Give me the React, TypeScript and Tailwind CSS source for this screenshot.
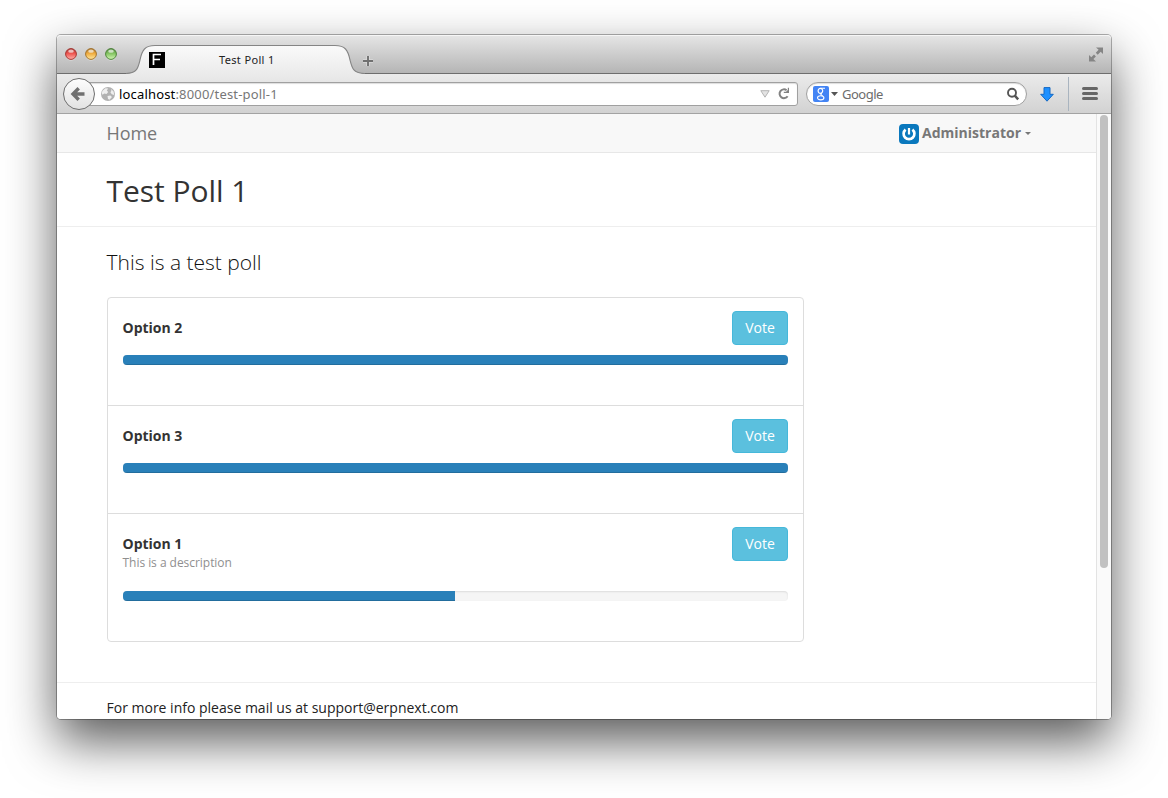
import React from "react";

const options = [
  { name: "Option 2", description: "", share: 100 },
  { name: "Option 3", description: "", share: 100 },
  { name: "Option 1", description: "This is a description", share: 49.9 },
];

function TrafficLight({ color, edge, glow }: { color: string; edge: string; glow: string }) {
  const id = "light" + color.slice(1);
  return (
    <svg width="12" height="13" viewBox="0 0 12 13">
      <defs>
        <linearGradient id={id} x1="0" y1="0" x2="0" y2="1">
          <stop offset="0" stopColor={edge} />
          <stop offset="0.45" stopColor={color} />
          <stop offset="1" stopColor={glow} />
        </linearGradient>
      </defs>
      <circle cx="6" cy="7" r="5.5" fill="#fff" opacity="0.5" />
      <circle cx="6" cy="6" r="5.4" fill={`url(#${id})`} stroke={edge} strokeWidth="1" />
      <ellipse cx="6" cy="3.2" rx="2.8" ry="1.6" fill="#fff" opacity="0.65" />
    </svg>
  );
}

function TabBar() {
  return (
    <div className="relative flex h-[38px] shrink-0 items-center rounded-t-[4px] bg-linear-to-b from-[#e6e6e6] to-[#b5b5b5] shadow-[inset_0_1px_0_#f6f6f6]">
      <div className="flex gap-2 pl-2">
        <TrafficLight color="#ee5550" edge="#a33430" glow="#ffb0aa" />
        <TrafficLight color="#f0ac3e" edge="#a1702a" glow="#ffe9a0" />
        <TrafficLight color="#84c462" edge="#4c8239" glow="#d3f7b5" />
      </div>
      <svg className="absolute left-[69px] top-[9px] z-10" width="240" height="30" viewBox="0 0 240 30">
        <defs>
          <linearGradient id="tab" x1="0" y1="0" x2="0" y2="1">
            <stop offset="0" stopColor="#fafafa" />
            <stop offset="1" stopColor="#ebebeb" />
          </linearGradient>
        </defs>
        <path d="M0 30V29.5C11 29.5 12 24 14 16C16 6 19 1.5 29 1.5H209C219 1.5 222 6 224 16C226 24 227 29.5 239 29.5V30Z" fill="url(#tab)" />
        <path d="M0 29.5C11 29.5 12 24 14 16C16 6 19 1.5 29 1.5H209C219 1.5 222 6 224 16C226 24 227 29.5 239 29.5" fill="none" stroke="#858585" strokeWidth="1.1" />
      </svg>
      <div className="relative z-20 ml-[32px] mt-[12px] flex h-4 w-4 items-center justify-center bg-black">
        <svg width="16" height="16" viewBox="0 0 16 16">
          <path d="M4.5 13V2.5H12M4.5 7.5H11" fill="none" stroke="#fff" strokeWidth="1.7" />
        </svg>
      </div>
      <div className="relative z-20 ml-[54px] mt-[12px] w-[140px] font-['Noto_Sans',sans-serif] text-[11px] leading-4 tracking-[0.35px] text-[#222]">Test Poll 1</div>
      <svg className="ml-[3px] mt-[13px]" width="12" height="12" viewBox="0 0 12 12">
        <path d="M6 1V11M1 6H11" stroke="#f2f2f2" strokeWidth="3.4" opacity="0.5" />
        <path d="M6 1V11M1 6H11" stroke="#707070" strokeWidth="1.9" />
      </svg>
      <svg className="absolute right-[7px] top-[12px]" width="16" height="15" viewBox="0 0 16 15">
        <path d="M8 .5H15V7L12.7 4.8L9.7 7.7L7.8 5.8L10.6 2.8ZM1 8L3.3 10.2L6 7.5L7.9 9.4L5.4 12.1L8 14.5H1Z" fill="#858585" />
      </svg>
    </div>
  );
}

function Toolbar() {
  return (
    <div className="relative flex h-[40px] shrink-0 items-center border-b border-[#a3a3a3] bg-linear-to-b from-[#ebebeb] to-[#d2d2d2] font-['Noto_Sans',sans-serif] text-[12px]">
      <div className="z-10 ml-[6px] flex h-8 w-8 items-center justify-center rounded-full border border-[#6e6e6e] bg-linear-to-b from-[#fdfdfd] to-[#e2e2e2]">
        <svg className="-ml-[2px]" width="16" height="16" viewBox="0 0 16 16">
          <path d="M8.7 2.2L3 8L8.7 13.8M3.5 8H14.5" fill="none" stroke="#707070" strokeWidth="3.4" />
        </svg>
      </div>
      <div className="-ml-[8px] flex h-6 w-[711px] items-center rounded-r-[3px] border border-[#a0a0a0] bg-white pl-[13px] shadow-[inset_0_1px_1px_#ddd]">
        <svg width="14" height="14" viewBox="0 0 14 14">
          <circle cx="7" cy="7" r="7" fill="#b2b2b2" />
          <path d="M1.5 3.8L4.5 1.2L7.2 1.6L5.8 3.6L7.2 5L5.5 7L3.4 6.4L1.4 7.8L.8 6ZM10 2L12.6 4.6L13.2 8L10.8 7.3L9.4 5.3L10.4 4ZM6.5 9L9.4 8.4L11 10L8.5 12.8L7 12Z" fill="#efefef" />
        </svg>
        <span className="ml-[4px] whitespace-pre text-[13px] leading-5 tracking-[0.17px] text-[#777]"><span className="text-black">localhost</span>:8000/test-poll-1</span>
        <svg className="ml-auto" width="10" height="8" viewBox="0 0 10 8">
          <path d="M.8 .7H9.2L5 7.2Z" fill="#e3e3e3" stroke="#b4b4b4" strokeWidth="1" />
        </svg>
        <svg className="ml-[7px] mr-[7px]" width="13" height="13" viewBox="0 0 13 13">
          <path d="M9.6 3.2A4.4 4.4 0 1 0 10.6 9.2" fill="none" stroke="#828282" strokeWidth="2" />
          <path d="M12 .8V6H6.8V4.8H9L10.8 3V.8Z" fill="#828282" />
        </svg>
      </div>
      <div className="ml-[8px] flex h-6 w-[221px] items-center rounded-full border border-[#a0a0a0] bg-white pl-[6px] shadow-[inset_0_1px_1px_#ddd]">
        <span className="flex h-4 w-4 items-center justify-center rounded-[2px] bg-[#4384f4]">
          <svg width="10" height="14" viewBox="0 0 10 14">
            <ellipse cx="4.4" cy="3.8" rx="2.3" ry="2.5" fill="none" stroke="#fff" strokeWidth="1.2" />
            <ellipse cx="4.7" cy="10.8" rx="3.2" ry="2.1" fill="none" stroke="#fff" strokeWidth="1.1" />
            <path d="M4.6 1.2H9M5.8 6C3.8 7.2 5 7.6 6.6 8.9" fill="none" stroke="#fff" strokeWidth="1.1" />
          </svg>
        </span>
        <svg className="ml-[2px]" width="7" height="4" viewBox="0 0 7 4"><path d="M0 0H7L3.5 4Z" fill="#555" /></svg>
        <span className="ml-[4px] text-[13px] leading-5 tracking-[-0.5px] text-[#6c6c6c]">Google</span>
        <svg className="ml-auto mr-[6px]" width="14" height="14" viewBox="0 0 14 14">
          <circle cx="6" cy="5.7" r="4" fill="none" stroke="#555" strokeWidth="1.9" />
          <path d="M8.8 8.7L12.2 12.4" stroke="#555" strokeWidth="2.5" />
        </svg>
      </div>
      <svg className="ml-[13px] mt-px" width="14" height="15" viewBox="0 0 14 15">
        <path d="M4 .6H10V7.3H13.3L7 14.2L.7 7.3H4Z" fill="#1d90ff" stroke="#1569c4" strokeWidth="1" />
      </svg>
      <div className="ml-[14px] h-[34px] w-px bg-[#a9b4bf]" />
      <div className="-mt-px ml-[13px] flex w-4 flex-col gap-[2px]">
        <i className="h-[3px] rounded-full bg-[#666]" />
        <i className="h-[3px] rounded-full bg-[#666]" />
        <i className="h-[3px] rounded-full bg-[#666]" />
      </div>
    </div>
  );
}

function Poll() {
  return (
    <div className="w-[697px] divide-y divide-[#ddd] rounded-[4px] border border-[#ddd]">
      {options.map((option) => (
        <div key={option.name} className={option.description ? "h-[127px] px-[15px] pt-[13px]" : "h-[108px] px-[15px] pt-[13px]"}>
          <div className="flex justify-between">
            <div className="-ml-[0.5px] pt-[7px]">
              <div className="text-[14px] font-bold leading-5">{option.name}</div>
              {option.description && <div className="text-[12px] leading-[17px] tracking-[-0.04px] text-[#8f8f8f]">{option.description}</div>}
            </div>
            <button className="h-[34px] w-[56px] rounded-[4px] border border-[#46b8da] bg-[#5bc0de] pb-[2px] text-[14px] text-white">Vote</button>
          </div>
          <div className={(option.description ? "mt-[20px]" : "mt-[10px]") + " h-[10px] overflow-hidden rounded-[4px] bg-[#f5f5f5] shadow-[inset_0_1px_2px_rgba(0,0,0,0.1)]"}>
            <div className="h-full bg-[#2980b9] shadow-[inset_0_-1px_0_rgba(0,0,0,0.15)]" style={{ width: `${option.share}%` }} />
          </div>
        </div>
      ))}
    </div>
  );
}

function Page() {
  return (
    <div className="flex min-h-0 flex-1 overflow-hidden rounded-b-[4px] bg-white">
      <div className="flex w-[1039px] flex-col">
        <nav className="flex h-[39px] shrink-0 items-center border-b border-[#e7e7e7] bg-[#f8f8f8] pl-[49.5px] text-[#777]">
          <a className="text-[18px] tracking-[-0.1px]">Home</a>
          <a className="ml-auto mr-[65px] flex items-center text-[14px] font-bold">
            <svg className="mr-[3px] mt-px" width="20" height="20" viewBox="0 0 20 20">
              <rect width="20" height="20" rx="4" fill="#0a78bd" />
              <path d="M6.6 5.6A5.4 5.4 0 1 0 13.4 5.6" fill="none" stroke="#fff" strokeWidth="2.7" />
              <path d="M10 4V10.5" stroke="#fff" strokeWidth="2.2" />
            </svg>
            <span className="-mt-[2px]">Administrator</span>
            <svg className="ml-[4px]" width="6" height="3" viewBox="0 0 6 3"><path d="M0 0H6L3 3Z" fill="#777" /></svg>
          </a>
        </nav>
        <header className="flex h-[74px] shrink-0 items-center border-b border-[#eee] pl-[49.5px] pt-[2px]">
          <h1 className="text-[30px] leading-[33px] tracking-[-0.05px]">Test Poll 1</h1>
        </header>
        <main className="h-[455px] shrink-0 pl-[50px] pt-[20px]">
          <p className="-ml-[0.5px] mb-[20px] text-[21px] font-light leading-[30px] text-[#111]">This is a test poll</p>
          <Poll />
        </main>
        <footer className="h-[38px] shrink-0 border-t border-[#eee] pl-[49.5px] pt-[15px] text-[14px] leading-5 text-[#222]">
          For more info please mail us at support@erpnext.com
        </footer>
      </div>
      <div className="w-[15px] border-l border-[#e3e3e3] bg-[#fafafa] pl-[3px] pt-px">
        <div className="h-[453px] w-[8px] rounded-full bg-[#c1c1c1]" />
      </div>
    </div>
  );
}

export default function App() {
  return (
    <div className="h-[798px] w-[1168px] overflow-hidden bg-white pl-[57px] pt-[35px] font-['Open_Sans',sans-serif] text-[#333]">
      <div className="flex h-[684px] w-[1054px] flex-col rounded-[4px] shadow-[0_0_0_1px_rgba(0,0,0,0.3),0_22px_50px_rgba(0,0,0,0.65)]">
        <TabBar />
        <div className="flex h-px shrink-0">
          <div className="w-[74px] bg-[#6e6e6e]" />
          <div className="w-[230px] bg-[#ebebeb]" />
          <div className="flex-1 bg-[#6e6e6e]" />
        </div>
        <Toolbar />
        <Page />
      </div>
    </div>
  );
}
